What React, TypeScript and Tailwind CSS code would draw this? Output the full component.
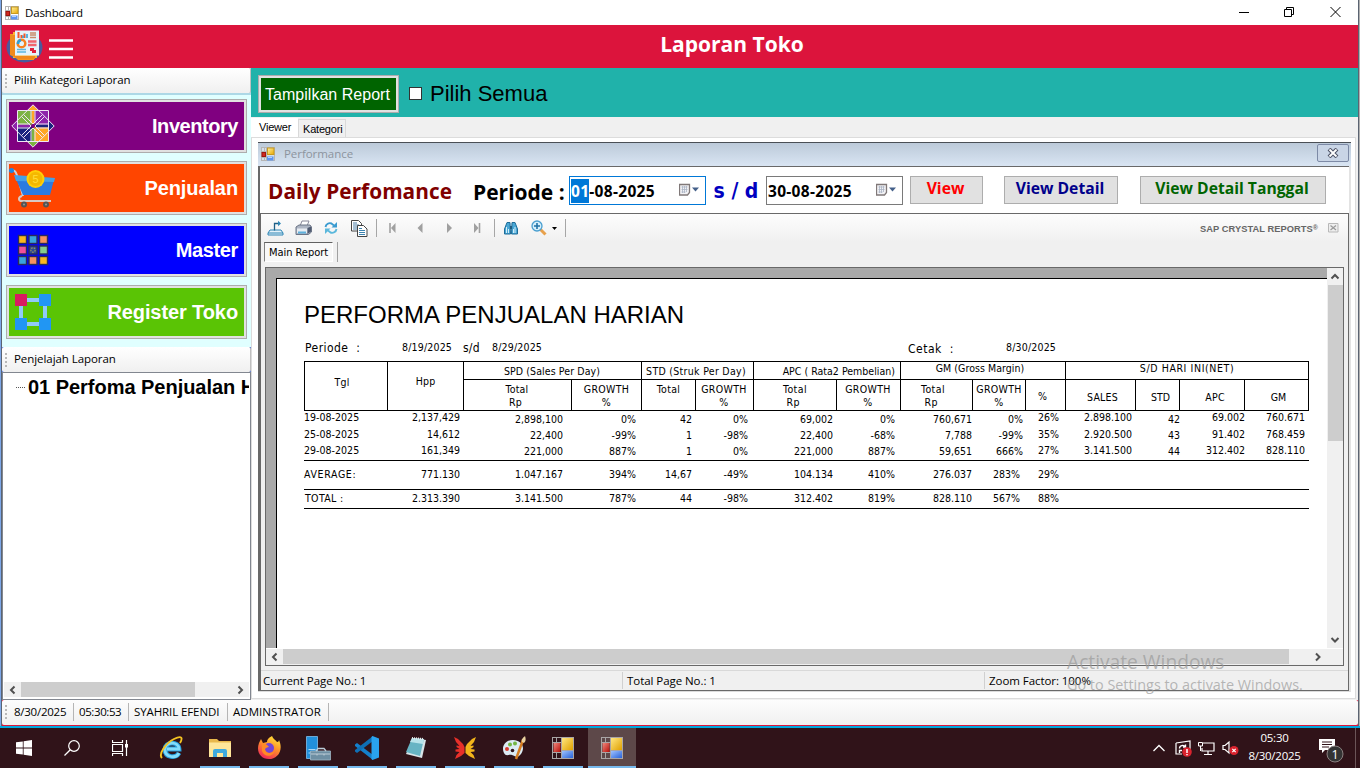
import React from "react";

const tahoma = "font-['DejaVu_Sans_Condensed','DejaVu_Sans',sans-serif] [font-stretch:condensed]";
const segoe = "font-['Open_Sans','Noto_Sans',sans-serif]";
const arial = "font-['Liberation_Sans',sans-serif]";

function FormIcon({ className }: { className: string }) {
  return (
    <svg viewBox="0 0 22 22" className={className}>
      <defs>
        <linearGradient id="fy" x1="0" y1="0" x2="1" y2="1">
          <stop offset="0" stopColor="#ffe680" />
          <stop offset="1" stopColor="#e0a000" />
        </linearGradient>
        <linearGradient id="fb" x1="0" y1="0" x2="1" y2="1">
          <stop offset="0" stopColor="#9dc1ff" />
          <stop offset="1" stopColor="#2a63d8" />
        </linearGradient>
        <linearGradient id="fr" x1="0" y1="0" x2="1" y2="1">
          <stop offset="0" stopColor="#f08a80" />
          <stop offset="1" stopColor="#b80f0a" />
        </linearGradient>
      </defs>
      <rect x="0.5" y="0.5" width="21" height="21" fill="none" stroke="#a9a5a5" />
      <path d="M9.500 0v22M0 5.500h9M0 15.500h9M9 13.500h13M4.500 15v7M4.500 0v5" stroke="#a9a5a5" fill="none" />
      <rect x="1.500" y="6" width="7" height="9" fill="url(#fr)" />
      <rect x="10" y="1" width="11" height="12" fill="url(#fy)" />
      <rect x="10" y="14" width="11" height="7" fill="url(#fb)" />
    </svg>
  );
}

function SmallFormIcon({ base }: { base: string }) {
  return (
    <svg viewBox="0 0 14 14" className="h-[14px] w-[14px] shrink-0">
      <defs>
        <linearGradient id="sy" x1="0" y1="0" x2="1" y2="1">
          <stop offset="0" stopColor="#fff0a0" />
          <stop offset="1" stopColor="#e8a800" />
        </linearGradient>
      </defs>
      <rect x=".5" y=".5" width="13" height="13" fill={base} stroke="#b5b5b5" />
      <path d="M5.500 0v14M0 4.500h6M0 10.500h6M3.500 10v4M3.500 0v4" stroke="#b5b5b5" />
      <rect x="1" y="5.500" width="3.500" height="4" fill="#d02a20" stroke="#9c1410" />
      <rect x="6.500" y="1" width="6.500" height="6.500" fill="url(#sy)" stroke="#c79a20" />
      <rect x="6" y="9.500" width="6.500" height="4" fill="#5d95f0" />
      <path d="M7 10.500h4" stroke="#b5d2ff" />
    </svg>
  );
}

function ReportsLogo() {
  return (
    <svg viewBox="0 0 37 34" className="mt-px h-[34px] w-[37px]">
      <ellipse cx="18.500" cy="17.500" rx="18" ry="15" fill="#4a5a9c" />
      <path d="M4 4h24v26H12l-8-8z" fill="#f7941d" />
      <path d="M7 2h24v26H7z" fill="#ffb52e" />
      <path d="M4 5v20l8 4h17v-3H9V5z" fill="#f08a1c" />
      <rect x="9" y="0.500" width="24" height="25" fill="#e4f3fb" />
      <path d="M12.500 2v6M15.500 5v3M18.500 3.500V8" stroke="#f2572b" strokeWidth="2" />
      <path d="M17 5.500V8M21 4v4" stroke="#2b9fd8" strokeWidth="1.500" />
      <path d="M24 3h6M24 5h6M24 7.500h6" stroke="#c98a6a" strokeWidth="1.500" />
      <circle cx="15.500" cy="13.500" r="3.800" fill="none" stroke="#f58220" strokeWidth="2.500" />
      <path d="M12 14a4 4 0 0 1 3-4" fill="none" stroke="#2b9fd8" strokeWidth="2.500" />
      <path d="M22 11.500h8.500M22 15h8.500" stroke="#f0646e" strokeWidth="2.400" />
      <path d="M11 19.500h9M11 22h9" stroke="#5bb8e0" strokeWidth="1.500" />
      <path d="M24 18h4v2h2v3h-4v-2h-2z" fill="#e0203c" />
    </svg>
  );
}

function InventoryIcon() {
  return (
    <svg viewBox="0 0 44 44" className="h-11 w-11">
      <path d="M22 1l6 6H16z" fill="#ffa726" />
      <path d="M22 43l6-6H16z" fill="#7cb342" />
      <path d="M1 22l6-6v12z" fill="#8e24aa" />
      <path d="M43 22l-6-6v12z" fill="#1a237e" />
      <rect x="6.500" y="6.500" width="15.500" height="15.500" fill="#7cb342" />
      <rect x="22" y="6.500" width="15.500" height="15.500" fill="#8e24aa" />
      <rect x="6.500" y="22" width="15.500" height="15.500" fill="#1a237e" />
      <rect x="22" y="22" width="15.500" height="15.500" fill="#ffa726" />
      <path d="M20.500 6h3v14h-3z" fill="#ffa726" />
      <path d="M20.500 24h3v14h-3z" fill="#7cb342" />
      <path d="M6 20.500h14v3H6z" fill="#8e24aa" />
      <path d="M24 20.500h14v3H24z" fill="#1a237e" />
      <g fill="none" stroke="#f0e6f5" strokeWidth="1">
        <path d="M6.500 6.500h31v31h-31zM22 .8L43.200 22 22 43.200.8 22z" />
        <path d="M20 7v12M24 7v12M20 25v12M24 25v12M7 20h12M7 24h12M25 20h12M25 24h12" />
        <path d="M12.500 10.500l9.500 9.500 9.500-9.500M12.500 33.500l9.500-9.500 9.500 9.500M10.500 12.500l9.500 9.500-9.500 9.500M33.500 12.500L24 22l9.500 9.500" />
      </g>
      <circle cx="22" cy="22" r="2" fill="#800080" />
    </svg>
  );
}

function CartIcon() {
  return (
    <svg viewBox="0 0 46 40" className="h-10 w-[46px]">
      <path d="M2 2c5 0 5 3 7 8l5 18" fill="none" stroke="#c9d3dc" strokeWidth="2" />
      <circle cx="2.500" cy="2.500" r="2.500" fill="#1e88e5" />
      <path d="M6 9l8 18h27l4.500-17z" fill="#2c7be0" />
      <path d="M5 7l41 3-1 4-38-1z" fill="#45a0e8" />
      <circle cx="26.500" cy="11" r="9" fill="#ffcf08" />
      <circle cx="26.500" cy="11" r="7" fill="#f5b800" />
      <text x="26.500" y="15" fontSize="11" textAnchor="middle" fill="#ffdf3a" className="font-['Liberation_Sans']">5</text>
      <path d="M13 28c-4 1-4 5 0 5h29" fill="none" stroke="#d8c9c4" strokeWidth="2" />
      <circle cx="15" cy="36.500" r="3" fill="#555" />
      <circle cx="37" cy="36.500" r="3" fill="#555" />
      <circle cx="15" cy="36.500" r="1" fill="#999" />
      <circle cx="37" cy="36.500" r="1" fill="#999" />
    </svg>
  );
}

function MasterIcon() {
  const colors = ["#f9b81f", "#3aa3dc", "#f5925e", "#f0509a", "#2a4a90", "#86cc8c", "#3aa3dc", "#f5925e", "#f9b81f"];
  return (
    <svg viewBox="0 0 32 32" className="h-8 w-8">
      {colors.map((c, i) => (
        <rect key={i} x={1.5 + (i % 3) * 10.5} y={1.5 + Math.floor(i / 3) * 10.5} width="8" height="8" fill={c} stroke="#2a2a5a" strokeWidth="1.400" />
      ))}
      <circle cx="16" cy="16" r="2.200" fill="none" stroke="#9c9060" strokeWidth="1.200" strokeDasharray="1.500 1" />
    </svg>
  );
}

function NodesIcon() {
  return (
    <svg viewBox="0 0 36 36" className="h-9 w-9">
      <path d="M6 6h24v24H6z" fill="none" stroke="#90caf9" strokeWidth="4" />
      <rect width="12" height="12" fill="#d81b60" />
      <rect x="24" width="12" height="12" fill="#2196f3" />
      <rect y="24" width="12" height="12" fill="#2196f3" />
      <rect x="24" y="24" width="12" height="12" fill="#2196f3" />
    </svg>
  );
}

function CategoryButton({ label, bg, pad, tracking, icon }: { label: string; bg: string; pad: string; tracking: string; icon: React.ReactNode }) {
  return (
    <div className="h-[54px] w-[241px] shrink-0 border border-[#adadad] bg-[#e1e1e1] p-[2px]">
      <div className={`flex h-full items-center justify-between pr-[6px] ${pad} ${bg}`}>
        {icon}
        <span className={`${arial} whitespace-nowrap pb-px text-[20px] font-bold text-white ${tracking}`}>{label}</span>
      </div>
    </div>
  );
}

function Grip() {
  return (
    <svg viewBox="0 0 2 14" className="h-[14px] w-[2px] shrink-0">
      <path d="M1 0v14" stroke="#b8b8b8" strokeWidth="2" strokeDasharray="2 2" />
    </svg>
  );
}

function StripHeader({ label, corner }: { label: string; corner: string }) {
  return (
    <div className={`h-[25px] shrink-0 ${corner}`}>
      <div className={`${segoe} flex h-full items-center gap-[7px] rounded-[2px] border-r border-[#c0c0c0] bg-linear-to-b from-white to-[#f0f0f0] pl-[3px] text-[11.500px] tracking-[-0.06px] text-black`}>
        <Grip />
        <span className="whitespace-nowrap pb-px">{label}</span>
      </div>
    </div>
  );
}

function Chevron({ d, className }: { d: string; className: string }) {
  return (
    <svg viewBox="0 0 16 16" className={className}>
      <path d={d} fill="none" stroke="#505050" strokeWidth="2" />
    </svg>
  );
}
const LEFT = "M10 4.500L6.500 8L10 11.500";
const RIGHT = "M6 4.500L9.500 8L6 11.500";
const UP = "M4.500 10L8 6.500L11.500 10";
const DOWN = "M4.500 6L8 9.500L11.500 6";

function Sidebar() {
  return (
    <aside className="flex w-[249px] shrink-0 flex-col bg-[#e0ffff]">
      <StripHeader label="Pilih Kategori Laporan" corner="bg-[#add8e6]" />
      <div className="h-[2px] shrink-0 bg-[#add8e6]" />
      <div className="flex h-[252px] shrink-0 flex-col gap-2 pl-1 pt-1">
        <CategoryButton label="Inventory" bg="bg-[#800080]" pad="pl-[2px]" tracking="tracking-[-0.45px]" icon={<InventoryIcon />} />
        <CategoryButton label="Penjualan" bg="bg-[#ff4500]" pad="pl-0" tracking="tracking-[-0.1px]" icon={<CartIcon />} />
        <CategoryButton label="Master" bg="bg-[#0000ff]" pad="pl-2" tracking="tracking-[-0.35px]" icon={<MasterIcon />} />
        <CategoryButton label="Register Toko" bg="bg-[#5ac405]" pad="pl-[6px]" tracking="tracking-[-0.1px]" icon={<NodesIcon />} />
      </div>
      <StripHeader label="Penjelajah Laporan" corner="bg-[#4169e1]" />
      <div className="flex h-[328px] shrink-0 flex-col justify-between border border-[#828790] bg-white px-px pb-[2px]">
        <div className="flex h-7 items-center gap-[3px] overflow-hidden pl-[12px]">
          <svg viewBox="0 0 9 1" className="h-px w-[9px] shrink-0"><path d="M0 .5h9" stroke="#555" strokeDasharray="1 1" /></svg>
          <span className={`${arial} whitespace-nowrap text-[20px] font-bold tracking-[-0.03px] text-black`}>01 Perfoma Penjualan Harian</span>
        </div>
        <div className="flex h-[15px] items-center bg-[#f0f0f0]">
          <Chevron d={LEFT} className="h-4 w-[17px]" />
          <div className="h-full w-[174px] bg-[#cdcdcd]" />
          <div className="flex-1" />
          <Chevron d={RIGHT} className="h-4 w-[17px]" />
        </div>
      </div>
    </aside>
  );
}

function DateBox({ border, first, rest }: { border: string; first: React.ReactNode; rest: string }) {
  return (
    <div className={`flex h-[29px] w-[137px] shrink-0 items-center justify-between border bg-white pl-px pr-[6px] ${border}`}>
      <span className={`${segoe} whitespace-nowrap pt-[4px] text-[15.500px] font-bold tracking-[0.3px] text-black`}>{first}{rest}</span>
      <svg viewBox="0 0 20 14" className="h-[14px] w-5">
        <path d="M.5 1.500h10v8l-2 2.500h-8z" fill="#f2f2f5" stroke="#807878" strokeWidth="1.300" />
        <path d="M2.500 4h6M2.500 6.500h6M2.500 9h4M3.500 3v7M5.500 3v7M7.500 3v6" stroke="#aab4c4" strokeWidth=".8" />
        <path d="M13 4.500h7l-3.500 4z" fill="#45608a" />
      </svg>
    </div>
  );
}

function ActionButton({ label, className }: { label: string; className: string }) {
  return (
    <div className={`${segoe} flex h-7 shrink-0 items-center justify-center border border-[#adadad] bg-[#e1e1e1] pb-[2px] pr-[2px] text-[15.700px] font-bold ${className}`}>
      <span className="whitespace-nowrap">{label}</span>
    </div>
  );
}

function Separator() {
  return <div className="h-[18px] w-px shrink-0 bg-[#a6a6a6]" />;
}

function ViewerToolbar() {
  return (
    <div className="flex h-7 shrink-0 items-center bg-linear-to-b from-[#fdfdfd] to-[#f0f0f0] pl-[6px] pr-[9px]">
      <svg viewBox="0 0 17 16" className="mr-[11px] h-4 w-[17px]">
        <path d="M3 10L1 13v2h15v-2l-2-3z" fill="#e4f2fa" stroke="#2e86b5" />
        <path d="M1 13h15" stroke="#2e86b5" />
        <path d="M7.500 10.500V3.500h5" fill="none" stroke="#1d5f86" strokeWidth="1.300" />
        <path d="M11 .8l3 2.700-3 2.700z" fill="#2e86b5" />
      </svg>
      <svg viewBox="0 0 17 16" className="mr-3 h-4 w-[17px]">
        <path d="M5 6l2-5h7l-2 5z" fill="#fff" stroke="#889" />
        <path d="M1 7l3-2h11l1.500 2v5l-3 2.500H1z" fill="#aeb6c4" stroke="#6b7486" />
        <path d="M2 8.500h10v4.500H2z" fill="#e8ecf2" />
        <path d="M3 11.500h8v2H3z" fill="#5db1dd" />
        <path d="M12.500 8l3.500-1.500v5L12.500 14z" fill="#4f5a70" />
      </svg>
      <svg viewBox="0 0 14 14" className="mr-[13px] h-[14px] w-[14px]">
        <path d="M1.500 6C2 3 5 1.500 7.500 2.500L10 4.500" fill="none" stroke="#3a9bd0" strokeWidth="1.900" />
        <path d="M13 1v5.500H7.500z" fill="#3a9bd0" />
        <path d="M12.500 8C12 11 9 12.500 6.500 11.500L4 9.500" fill="none" stroke="#5bb8dc" strokeWidth="1.900" />
        <path d="M1 13V7.500h5.500z" fill="#5bb8dc" />
      </svg>
      <svg viewBox="0 0 17 17" className="mr-2 h-[17px] w-[17px]">
        <path d="M.5.5h7l3 3v7.500H.5z" fill="#fff" stroke="#444" />
        <path d="M2 3h4M2 5h6M2 7h6M2 9h4" stroke="#4a7fa8" />
        <path d="M6.500 5.500h6l3.500 3.500v7.500H6.500z" fill="#fff" stroke="#444" />
        <path d="M8 8.500h3M8 10.500h6M8 12.500h6M8 14.500h6" stroke="#3d84b0" />
      </svg>
      <Separator />
      <svg viewBox="0 0 8 10" className="ml-[11px] mr-[21px] h-[10px] w-2"><path d="M2 0v10" stroke="#a0a0a0" strokeWidth="1.600" /><path d="M7.500 0v10L3 5z" fill="#a0a0a0" /></svg>
      <svg viewBox="0 0 6 10" className="mr-6 h-[10px] w-[6px]"><path d="M5.500 0v10L.5 5z" fill="#a0a0a0" /></svg>
      <svg viewBox="0 0 6 10" className="mr-5 h-[10px] w-[6px]"><path d="M0 0v10l5-5z" fill="#a0a0a0" /></svg>
      <svg viewBox="0 0 8 10" className="mr-[13px] h-[10px] w-2"><path d="M6.500 0v10" stroke="#a0a0a0" strokeWidth="1.600" /><path d="M1 0v10l4.500-5z" fill="#a0a0a0" /></svg>
      <Separator />
      <svg viewBox="0 0 14 14" className="ml-[9px] mr-[13px] h-[14px] w-[14px]">
        <path d="M.5 13V8L3 1.500h3L6.500 13zM13.500 13V8L11 1.500H8L7.500 13z" fill="#4aa8d6" stroke="#1f6c98" />
        <path d="M6 5h2v3H6z" fill="#1f5c80" />
        <path d="M2.500 6v6M11 6v6M4.500 8v4M9.500 8v4" stroke="#d3eefa" />
      </svg>
      <svg viewBox="0 0 16 16" className="h-4 w-4">
        <path d="M9.500 9.500l5 5" stroke="#e8a14c" strokeWidth="3" />
        <circle cx="6" cy="6" r="5" fill="#d6effb" stroke="#4a9fd0" strokeWidth="1.300" />
        <path d="M3 6h6M6 3v6" stroke="#2173a8" strokeWidth="1.600" />
      </svg>
      <svg viewBox="0 0 5 3" className="ml-[5px] mr-2 h-[3px] w-[5px]"><path d="M0 0h5L2.500 3z" fill="#000" /></svg>
      <Separator />
      <div className="flex-1" />
      <span className={`${arial} whitespace-nowrap pt-[4px] text-[9.300px] font-bold tracking-[0.05px] text-[#666]`}>SAP CRYSTAL REPORTS<span className="align-[2px] text-[7px]">®</span></span>
      <svg viewBox="0 0 11 10" className="ml-[10px] h-[10px] w-[11px]">
        <path d="M.5.500h9.500v8.500H.5z" fill="#eee" stroke="#b8b8b8" />
        <path d="M2.500 2.500l5.500 4.500M8 2.500L2.500 7" stroke="#999" strokeWidth="1.200" />
      </svg>
    </div>
  );
}

const cols = "grid-cols-[83px_76px_108px_70px_54px_58px_83px_64px_72px_53px_40px_70px_44px_65px_64px]";

function Head({ className, children }: { className: string; children: React.ReactNode }) {
  return <div className={`flex justify-center whitespace-nowrap border-l border-black text-center leading-[13px] ${className}`}>{children}</div>;
}

function TableHead() {
  return (
    <div className={`grid w-[1005px] ${cols} grid-rows-[18px_30px] border-y border-r border-black`}>
      <Head className="row-span-2 items-center pb-[8px] pr-2 tracking-[0.2px]">Tgl</Head>
      <Head className="row-span-2 items-center pb-[10px] tracking-[0.2px]">Hpp</Head>
      <Head className="col-span-2 items-center border-b pr-px pt-px tracking-[0.1px]">SPD (Sales Per Day)</Head>
      <Head className="col-span-2 items-center border-b pr-[3px] pt-px tracking-[0.3px]">STD (Struk Per Day)</Head>
      <Head className="col-span-2 items-center justify-end border-b pr-[5px] pt-px tracking-[0.02px]">APC ( Rata2 Pembelian)</Head>
      <Head className="col-span-3 items-center border-b pb-[5px] pr-[6px] tracking-[0.05px]">GM (Gross Margin)</Head>
      <Head className="col-span-4 items-center border-b pb-[5px] tracking-[0.6px]">S/D HARI INI(NET)</Head>
      <Head className="pr-px pt-[3px] tracking-[0.2px]"><span>Total<br />Rp&nbsp;</span></Head>
      <Head className="pt-[3px] tracking-[0.3px]"><span>GROWTH<br />%</span></Head>
      <Head className="pt-[3px] tracking-[0.3px]">Total</Head>
      <Head className="pr-px pt-[3px] tracking-[0.35px]"><span>GROWTH<br />%</span></Head>
      <Head className="pt-[3px] tracking-[0.4px]"><span>Total<br />Rp&nbsp;</span></Head>
      <Head className="pr-px pt-[3px] tracking-[0.35px]"><span>GROWTH<br />%</span></Head>
      <Head className="pr-[7px] pt-[3px] tracking-[0.4px]"><span>Total<br />Rp&nbsp;</span></Head>
      <Head className="pt-[3px] tracking-[0.3px]"><span>GROWTH<br />%</span></Head>
      <Head className="items-center pr-[6px] pt-[2px]">%</Head>
      <Head className="items-center pl-1 pt-1 tracking-[0.2px]">SALES</Head>
      <Head className="items-center pl-[6px] pt-1">STD</Head>
      <Head className="items-center pl-[6px] pt-1 tracking-[0.3px]">APC</Head>
      <Head className="items-center pl-1 pt-1">GM</Head>
    </div>
  );
}

const cellPad = [
  "", "pr-[3px]", "pr-2", "pr-[5px]", "pr-[3px]", "pr-[5px]", "pr-[3px]", "pr-[5px]", "pr-0", "pr-[2px]", "pr-[6px]", "pr-[3px]", "-mr-px", "-mr-px", "pr-[3px]",
];
const raisedCols = [0, 1, 10, 11, 13, 14];

function TableRow({ cells, height, lift, summary, label }: { cells: string[]; height: string; lift: string; summary?: boolean; label?: string }) {
  return (
    <div className={`grid w-[1005px] ${cols} ${height} ${summary ? "border-b border-black" : ""}`}>
      {cells.map((c, i) => (
        <div
          key={i}
          className={`flex items-center whitespace-nowrap leading-none ${i === 0 ? `justify-start ${label ?? "tracking-[0.03px]"}` : "justify-end"} ${label && i === 9 ? "pr-[5px]" : cellPad[i]} ${raisedCols.includes(i) ? lift : ""}`}
        >
          {c}
        </div>
      ))}
    </div>
  );
}

function ReportPage() {
  return (
    <div className={`${tahoma} h-full overflow-hidden border-l border-t border-black bg-white pl-[27px] text-[10.500px] text-black`}>
      <div className={`${arial} mt-[21px] h-8 whitespace-nowrap text-[24px] leading-[30px]`}>PERFORMA PENJUALAN HARIAN</div>
      <div className="mt-[5px] flex h-[22px] items-center whitespace-nowrap tracking-[0.18px]">
        <span className="w-[98px] pl-px text-[12px] tracking-[0.45px]">Periode&nbsp; :</span>
        <span className="w-[61px]">8/19/2025</span>
        <span className="w-[29px] text-[12px] tracking-[0.2px]">s/d</span>
        <span className="w-[416px]">8/29/2025</span>
        <span className="w-[98px] pt-[2px] text-[12px] tracking-[0.5px]">Cetak&nbsp; :</span>
        <span>8/30/2025</span>
      </div>
      <div className="h-[2px]" />
      <TableHead />
      <TableRow height="h-4" lift="pb-1" cells={["19-08-2025", "2,137,429", "2,898,100", "0%", "42", "0%", "69,002", "0%", "760,671", "0%", "26%", "2.898.100", "42", "69.002", "760.671"]} />
      <TableRow height="h-4" lift="pb-[2px]" cells={["25-08-2025", "14,612", "22,400", "-99%", "1", "-98%", "22,400", "-68%", "7,788", "-99%", "35%", "2.920.500", "43", "91.402", "768.459"]} />
      <TableRow height="h-[18px] pb-px" lift="pb-[2px]" summary cells={["29-08-2025", "161,349", "221,000", "887%", "1", "0%", "221,000", "887%", "59,651", "666%", "27%", "3.141.500", "44", "312.402", "828.110"]} />
      <TableRow height="h-[29px] pb-[2px]" lift="" summary label="tracking-[0.65px]" cells={["AVERAGE:", "771.130", "1.047.167", "394%", "14,67", "-49%", "104.134", "410%", "276.037", "283%", "29%", "", "", "", ""]} />
      <TableRow height="h-[19px] pb-[2px]" lift="" summary label="pl-px tracking-[0.35px]" cells={["TOTAL :", "2.313.390", "3.141.500", "787%", "44", "-98%", "312.402", "819%", "828.110", "567%", "88%", "", "", "", ""]} />
    </div>
  );
}

function PerformanceWindow() {
  return (
    <div className="flex h-[550px] w-[1093px] shrink-0 flex-col">
      <div className="flex h-6 shrink-0 items-center border-t border-[#4a4f55] bg-linear-to-b from-[#bccad9] to-[#d9e5f3] pl-[3px] pr-[2px]">
        <div className="-mt-px"><SmallFormIcon base="#d5dfea" /></div>
        <span className={`${segoe} ml-[9px] flex-1 pb-[2px] text-[11.500px] tracking-[-0.05px] text-[#8c949e]`}>Performance</span>
        <div className="mb-[3px] flex h-[18px] w-8 items-center justify-center rounded-[2px] border border-[#7d8aa6] bg-[#c9d5e6]">
          <svg viewBox="0 0 12 10" className="h-[10px] w-3">
            <path d="M2 1l8 8M10 1L2 9" stroke="#4e5468" strokeWidth="4" />
            <path d="M2.500 1.500l7 7M9.500 1.500l-7 7" stroke="#fff" strokeWidth="1.800" />
          </svg>
        </div>
      </div>
      <div className="flex min-h-0 flex-1 flex-col border-r-2 border-r-[#e3e3e3] border-b border-b-[#dcdcdc]">
        <div className="flex min-h-0 flex-1 flex-col border-l-2 border-t border-[#696969] bg-white">
          <div className="flex h-[46px] shrink-0 items-center whitespace-nowrap">
            <span className={`${segoe} w-[205px] pl-2 pt-[4px] text-[20.800px] font-bold tracking-[0.05px] text-[#800000]`}>Daily Perfomance</span>
            <span className={`${segoe} w-[104px] pl-2 pt-[6px] text-[21px] font-bold text-black`}>Periode :</span>
            <div className="flex items-center">
              <DateBox border="border-[#0078d7]" first={<span className="bg-[#0078d7] py-px text-white">01</span>} rest="-08-2025" />
              <span className={`${tahoma} flex w-[60px] justify-center pt-[3px] text-[21px] font-bold text-[#0000c0]`}>s / d</span>
              <DateBox border="border-[#7a7a7a]" first="30" rest="-08-2025" />
              <ActionButton label="View" className="ml-[7px] w-[73px] text-[#ff0000]" />
              <ActionButton label="View Detail" className="ml-[21px] w-[114px] text-[#00008b]" />
              <ActionButton label="View Detail Tanggal" className="ml-[22px] w-[186px] text-[#006400]" />
            </div>
          </div>
          <div className="flex min-h-0 flex-1 flex-col border border-[#696969] bg-[#f0f0f0]">
            <ViewerToolbar />
            <div className="flex h-[25px] shrink-0 pl-[3px] pt-0">
              <div className={`${tahoma} flex h-[20px] w-[69px] items-center justify-center whitespace-nowrap border border-b-white border-l-[#808080] border-r-white border-t-[#606060] bg-[#f8f8f8] pt-[3px] text-[11px] tracking-[-0.05px] text-black`}>Main Report</div>
              <div className="ml-1 h-5 w-px bg-[#a0a0a0]" />
            </div>
            <div className="ml-[4px] mr-[4px] flex h-[399px] shrink-0 flex-col border border-[#696969] bg-[#f0f0f0]">
              <div className="flex h-[380px] shrink-0">
                <div className="h-full flex-1 bg-[#a9a9a9] pl-[10px] pt-[10px]"><ReportPage /></div>
                <div className="flex w-4 flex-col items-center">
                  <Chevron d={UP} className="h-[17px] w-4" />
                  <div className="h-[156px] w-[15px] bg-[#cdcdcd]" />
                  <div className="flex-1" />
                  <Chevron d={DOWN} className="h-4 w-4" />
                </div>
              </div>
              <div className="flex h-4 shrink-0 items-center border-t border-white pr-4">
                <Chevron d={LEFT} className="h-4 w-[17px]" />
                <div className="h-full w-[1006px] bg-[#cdcdcd]" />
                <div className="flex-1" />
                <Chevron d={RIGHT} className="h-4 w-[18px]" />
              </div>
            </div>
            <div className={`${segoe} mt-1 flex h-5 shrink-0 items-center whitespace-nowrap border-t border-[#d9d9d9] text-[11.500px] tracking-[-0.06px] text-black`}>
              <span className="w-[361px] pl-[2px]">Current Page No.: 1</span>
              <span className="w-[362px] border-l border-[#d0d0d0] pl-1">Total Page No.: 1</span>
              <span className="flex-1 border-l border-[#d0d0d0] pl-1">Zoom Factor: 100%</span>
            </div>
          </div>
        </div>
      </div>
    </div>
  );
}

function Main() {
  return (
    <main className="flex min-w-0 flex-1 flex-col bg-[#f0f0f0]">
      <div className="flex h-[49px] shrink-0 items-center bg-[#20b2aa] pl-[7px] pt-[2px]">
        <div className="flex h-[38px] w-[141px] items-center border border-[#adadad] bg-[#e1e1e1] p-[2px]">
          <div className={`${arial} flex h-full flex-1 items-center justify-center whitespace-nowrap bg-[#006400] pr-[2px] pt-[2px] text-[16px] tracking-[0.02px] text-white`}>Tampilkan Report</div>
        </div>
        <div className="ml-[10px] h-[13px] w-[13px] border border-[#333] bg-white" />
        <span className={`${arial} ml-2 whitespace-nowrap text-[22px] leading-6 text-black`}>Pilih Semua</span>
      </div>
      <div className={`${arial} flex h-5 shrink-0 items-end whitespace-nowrap text-[11px] tracking-[-0.2px] text-black`}>
        <div className="h-[19px] w-[47px] bg-white pl-2 pt-px leading-4">Viewer</div>
        <div className="h-[18px] w-[48px] border border-b-0 border-[#d9d9d9] pl-1 pt-px leading-4">Kategori</div>
      </div>
      <div className="mr-[2px] flex min-h-0 flex-1 flex-col border border-[#dcdcdc] bg-white pl-[6px] pt-1">
        <PerformanceWindow />
      </div>
      <div className="h-px shrink-0" />
    </main>
  );
}

function StatusBar() {
  return (
    <div className="h-[26px] shrink-0 border-b border-[#dc143c] bg-[#dc143c]">
      <div className={`${segoe} flex h-full items-center whitespace-nowrap rounded-[2px] bg-linear-to-b from-[#fdfdfd] to-[#f0f0f0] pb-px pl-[3px] text-[11.500px] tracking-[-0.1px] text-black`}>
        <Grip />
        <span className="ml-[7px] w-[59px] tracking-[-0.25px]">8/30/2025</span>
        <span className="w-[55px] border-l border-[#b5b5b5] pl-[5px] tracking-[-0.4px]">05:30:53</span>
        <span className="w-[99px] border-l border-[#b5b5b5] pl-[5px]">SYAHRIL EFENDI</span>
        <span className="w-[102px] border-x border-[#b5b5b5] pl-[5px] tracking-[0.05px]">ADMINSTRATOR</span>
      </div>
    </div>
  );
}

function Slot({ children, active, running }: { children: React.ReactNode; active?: boolean; running?: boolean }) {
  return (
    <div className={`flex h-10 w-12 shrink-0 flex-col items-center ${active ? "bg-[#5d4849]" : ""}`}>
      <div className="flex h-[38px] items-center pt-[2px]">{children}</div>
      {(running || active) && <div className={`h-[2px] bg-[#76b9ed] ${active ? "w-12" : "w-10"}`} />}
    </div>
  );
}

function Taskbar() {
  return (
    <div className="flex h-10 shrink-0 bg-[#301319]">
      <Slot>
        <svg viewBox="0 0 16 16" className="h-4 w-4"><path d="M0 2.300L6.800 1.400V7.600H0zM7.600 1.300L16 0v7.600H7.600zM0 8.400h6.800v6.200L0 13.700zM7.600 8.400H16V16l-8.400-1.200z" fill="#fff" /></svg>
      </Slot>
      <Slot>
        <svg viewBox="0 0 16 16" className="h-4 w-4"><circle cx="10" cy="6" r="5.300" fill="none" stroke="#fff" strokeWidth="1.200" /><path d="M6.300 9.800L.5 15.500" stroke="#fff" strokeWidth="1.300" /></svg>
      </Slot>
      <Slot>
        <svg viewBox="0 0 17 16" className="h-4 w-[17px]"><path d="M.5 0v2.500h10V0M.5 16v-2.500h10V16M.5 4.500h10v7H.5zM14.500 0v16" fill="none" stroke="#fff" strokeWidth="1.200" /><rect x="13" y="4" width="3" height="3.500" fill="#fff" /></svg>
      </Slot>
      <div className="w-[3px] shrink-0" />
      <div className="flex gap-px">
        <Slot>
          <svg viewBox="0 0 24 24" className="h-6 w-6">
            <path d="M20 17c-3 6-14 4.500-14-3.500S19.500 4.500 20 13H8" fill="none" stroke="#249ddc" strokeWidth="4.800" />
            <path d="M20 17c-3 6-14 4.500-14-3.500S19.500 4.500 20 13H8" fill="none" stroke="#83dcfa" strokeWidth="2.800" />
            <path d="M3 22C-1 18 7 7 15 3s9-1 6 4" fill="none" stroke="#f5c322" strokeWidth="1.900" />
          </svg>
        </Slot>
        <Slot running>
          <svg viewBox="0 0 22 20" className="h-5 w-[22px]">
            <path d="M0 1h8l2 2h12v16H0z" fill="#e9b84c" />
            <path d="M0 4.500h22V19H0z" fill="#ffe69a" />
            <path d="M4 19v-6q0-2 2-2h10q2 0 2 2v6h-4v-4H8v4z" fill="#3fa9de" />
          </svg>
        </Slot>
        <Slot running>
          <svg viewBox="0 0 24 24" className="h-6 w-6">
            <defs><linearGradient id="ff" x1=".8" y1="0" x2=".3" y2="1"><stop offset="0" stopColor="#ffe83a" /><stop offset=".45" stopColor="#ff9328" /><stop offset="1" stopColor="#f0275a" /></linearGradient></defs>
            <path d="M15 0c1 3 4 4 5 6 2 0 2-2 2-2 5 11-2 19-10 19C3 23-1 15 2 7l2-4 2 4 4-1c0-3 3-5 5-6z" fill="url(#ff)" />
            <circle cx="12" cy="12" r="5" fill="#7345d6" />
            <path d="M5 8c4-1 5 1 7 3-2 0-3 1-4 2 1 5 7 5 10 1-1 7-11 8-13 1z" fill="#ff8a26" />
          </svg>
        </Slot>
        <Slot running>
          <svg viewBox="0 0 25 25" className="h-[25px] w-[25px]">
            <path d="M.5 .5h11v22H.5z" fill="#2290dc" stroke="#7fc0ee" strokeWidth=".8" />
            <path d="M2.500 13.500h7M2.500 17h2" stroke="#a8d8f8" />
            <path d="M4.500 15h20v9h-20z" fill="#6e8fa3" stroke="#9fb6c4" strokeWidth=".8" />
            <path d="M10 15l2-2.500h6l2 2.500" fill="none" stroke="#b9cbd6" strokeWidth="1.300" />
            <path d="M5 18h6v1.500M24 18h-6v1.500M11 18h7" fill="none" stroke="#c5d4dc" strokeWidth=".9" />
          </svg>
        </Slot>
        <Slot running>
          <svg viewBox="0 0 24 24" className="h-6 w-6">
            <path d="M0 8.500l2-1.500 16 12v5L0 10z" fill="#1480cc" />
            <path d="M0 15.500L2 17 18 5V0L0 14z" fill="#0f6fb5" />
            <path d="M17.500 0l6.500 2.500v19L17.500 24l-1-1V1z" fill="#2aa3ee" />
          </svg>
        </Slot>
        <Slot running>
          <svg viewBox="0 0 24 24" className="h-6 w-6">
            <path d="M9 2l13 2-4 18L2 18z" fill="#d8e4e8" />
            <path d="M8 2l12 1-4 17L2 16z" fill="#67b4c4" />
            <path d="M8 2l12 1-1 5L6 6z" fill="#b8e3ea" />
            <path d="M8 2l12 1" stroke="#e8e8e8" strokeWidth="2" strokeDasharray="1 1" />
          </svg>
        </Slot>
        <Slot running>
          <svg viewBox="0 0 24 24" className="h-6 w-6">
            <path d="M1 1l4 2 5 5 1.500 3v6L8 20l-6 3 1.500-4 3-3-4-.500 0-2 4-.500-3-2 0-1.500 3 .5L3 6z" fill="#e8302a" />
            <path d="M23 1l-4 2-5 5-1.500 3v6l3.500 3 6 3-1.500-4-3-3 4-.500 0-2-4-.500 3-2 0-1.500-3 .5L21 6z" fill="#f3b51b" />
          </svg>
        </Slot>
        <Slot running>
          <svg viewBox="0 0 24 24" className="h-6 w-6">
            <path d="M11 4C3 4-1 11 2 17c2 4 5 1 8 2s5 4 9-1C24 11 19 4 11 4z" fill="#dcebf4" />
            <circle cx="5" cy="13" r="2" fill="#d63a2d" /><circle cx="8" cy="8.500" r="2" fill="#73b643" /><circle cx="13" cy="7.500" r="2" fill="#73b643" /><circle cx="10.500" cy="14.500" r="1.800" fill="#301319" />
            <path d="M21 4l-7 19" stroke="#d67d21" strokeWidth="2.500" />
            <path d="M20 6c-1-3 1-4 3-6 1 3 1 5-1 7z" fill="#ead2a0" />
          </svg>
        </Slot>
        <Slot running><FormIcon className="h-[22px] w-[22px]" /></Slot>
        <Slot active><FormIcon className="h-[22px] w-[22px]" /></Slot>
      </div>
      <div className="flex-1" />
      <div className="flex shrink-0 items-center">
        <svg viewBox="0 0 12 8" className="mr-[10px] h-2 w-3"><path d="M.5 7L6 1.500 11.500 7" fill="none" stroke="#fff" strokeWidth="1.300" /></svg>
        <svg viewBox="0 0 17 17" className="mr-[6px] h-[17px] w-[17px]">
          <path d="M1 3l14-2v11M1 3v11h6" fill="none" stroke="#fff" strokeWidth="1.200" />
          <path d="M4.500 8.500c0-3 4-4 6-1.500M10.500 4.500V7H8M4.500 13v-2.500H7" fill="none" stroke="#fff" strokeWidth="1.400" />
          <circle cx="12" cy="12" r="4.800" fill="#d9232e" /><path d="M12 9v4M12 14v1.300" stroke="#fff" strokeWidth="1.500" />
        </svg>
        <svg viewBox="0 0 17 15" className="mr-[7px] h-[15px] w-[17px]">
          <path d="M5 2h11v8H4V7M10 10v3M6 13.500h8" fill="none" stroke="#fff" strokeWidth="1.200" />
          <path d="M.5 1.500h4V5h-4zM2.500 5v5" fill="none" stroke="#fff" />
        </svg>
        <svg viewBox="0 0 17 16" className="mr-[9px] h-4 w-[17px]">
          <path d="M1 5.500h2L7 2v11L3 9.500H1z" fill="none" stroke="#fff" strokeWidth="1.200" />
          <circle cx="12" cy="10.500" r="4.500" fill="#d9232e" /><path d="M10.300 8.800l3.400 3.400M13.700 8.800l-3.400 3.400" stroke="#fff" strokeWidth="1.200" />
        </svg>
        <div className={`${segoe} flex w-[53px] flex-col items-center whitespace-nowrap pb-[2px] text-[11.500px] leading-[18px] tracking-[-0.25px] text-white`}>
          <span>05:30</span>
          <span>8/30/2025</span>
        </div>
        <svg viewBox="0 0 25 25" className="ml-[18px] mt-[5px] h-[25px] w-[25px]">
          <path d="M0 1h16v11H6l-3 3v-3H0z" fill="#fff" />
          <path d="M3 4h10M3 6.500h10M3 9h7" stroke="#301319" />
          <circle cx="16" cy="16" r="8" fill="#333" stroke="#8a8080" />
          <text x="16" y="20.500" fontSize="12.500" textAnchor="middle" fill="#fff" className="font-['Open_Sans']">1</text>
        </svg>
        <div className="ml-[11px] mr-[4px] h-10 w-px bg-[#6b5558]" />
      </div>
    </div>
  );
}

export default function App() {
  return (
    <div className="relative flex h-[768px] w-[1360px] flex-col overflow-hidden bg-white">
      <div className="flex h-[726px] shrink-0 border-l border-r border-l-[#7da7e8] border-r-[#b0b0b0]">
        <div className="flex min-w-0 flex-1 flex-col border-x border-[#5b6472]">
          <header className="flex h-[25px] shrink-0 items-center bg-white pl-[3px] pr-[17px]">
            <SmallFormIcon base="#ffffff" />
            <span className={`${segoe} ml-[6px] flex-1 text-[11.500px] tracking-[-0.15px] text-black`}>Dashboard</span>
            <svg viewBox="0 0 102 12" className="mb-[2px] h-3 w-[102px]">
              <path d="M0 6.500h10M45.500 3.500h7v7h-7zM47.500 3.500v-2h7v7h-2M91.500 1l10 10M101.500 1l-10 10" fill="none" stroke="#000" />
            </svg>
          </header>
          <div className="grid h-[43px] shrink-0 grid-cols-[270px_1fr_270px] items-center bg-[#dc143c]">
            <div className="flex items-center gap-[6px] pl-[4px]">
              <ReportsLogo />
              <svg viewBox="0 0 24 20" className="mt-[5px] h-5 w-6"><path d="M0 1.500h24M0 10h24M0 18.500h24" stroke="#fff" strokeWidth="2.600" /></svg>
            </div>
            <h1 className={`${segoe} whitespace-nowrap pb-1 pl-[104px] text-center text-[21px] font-bold text-white`}>Laporan Toko</h1>
            <div />
          </div>
          <div className="flex h-[632px] shrink-0">
            <Sidebar />
            <Main />
          </div>
          <StatusBar />
        </div>
      </div>
      <div className="h-[2px] shrink-0 bg-[#00a8e0]" />
      <Taskbar />
      <div className={`${segoe} pointer-events-none absolute left-[1067px] top-[649px] whitespace-nowrap text-[#9a9a9a]/70`}>
        <div className="text-[19.200px] leading-[26px]">Activate Windows</div>
        <div className="text-[14.400px] leading-[20px]">Go to Settings to activate Windows.</div>
      </div>
    </div>
  );
}
